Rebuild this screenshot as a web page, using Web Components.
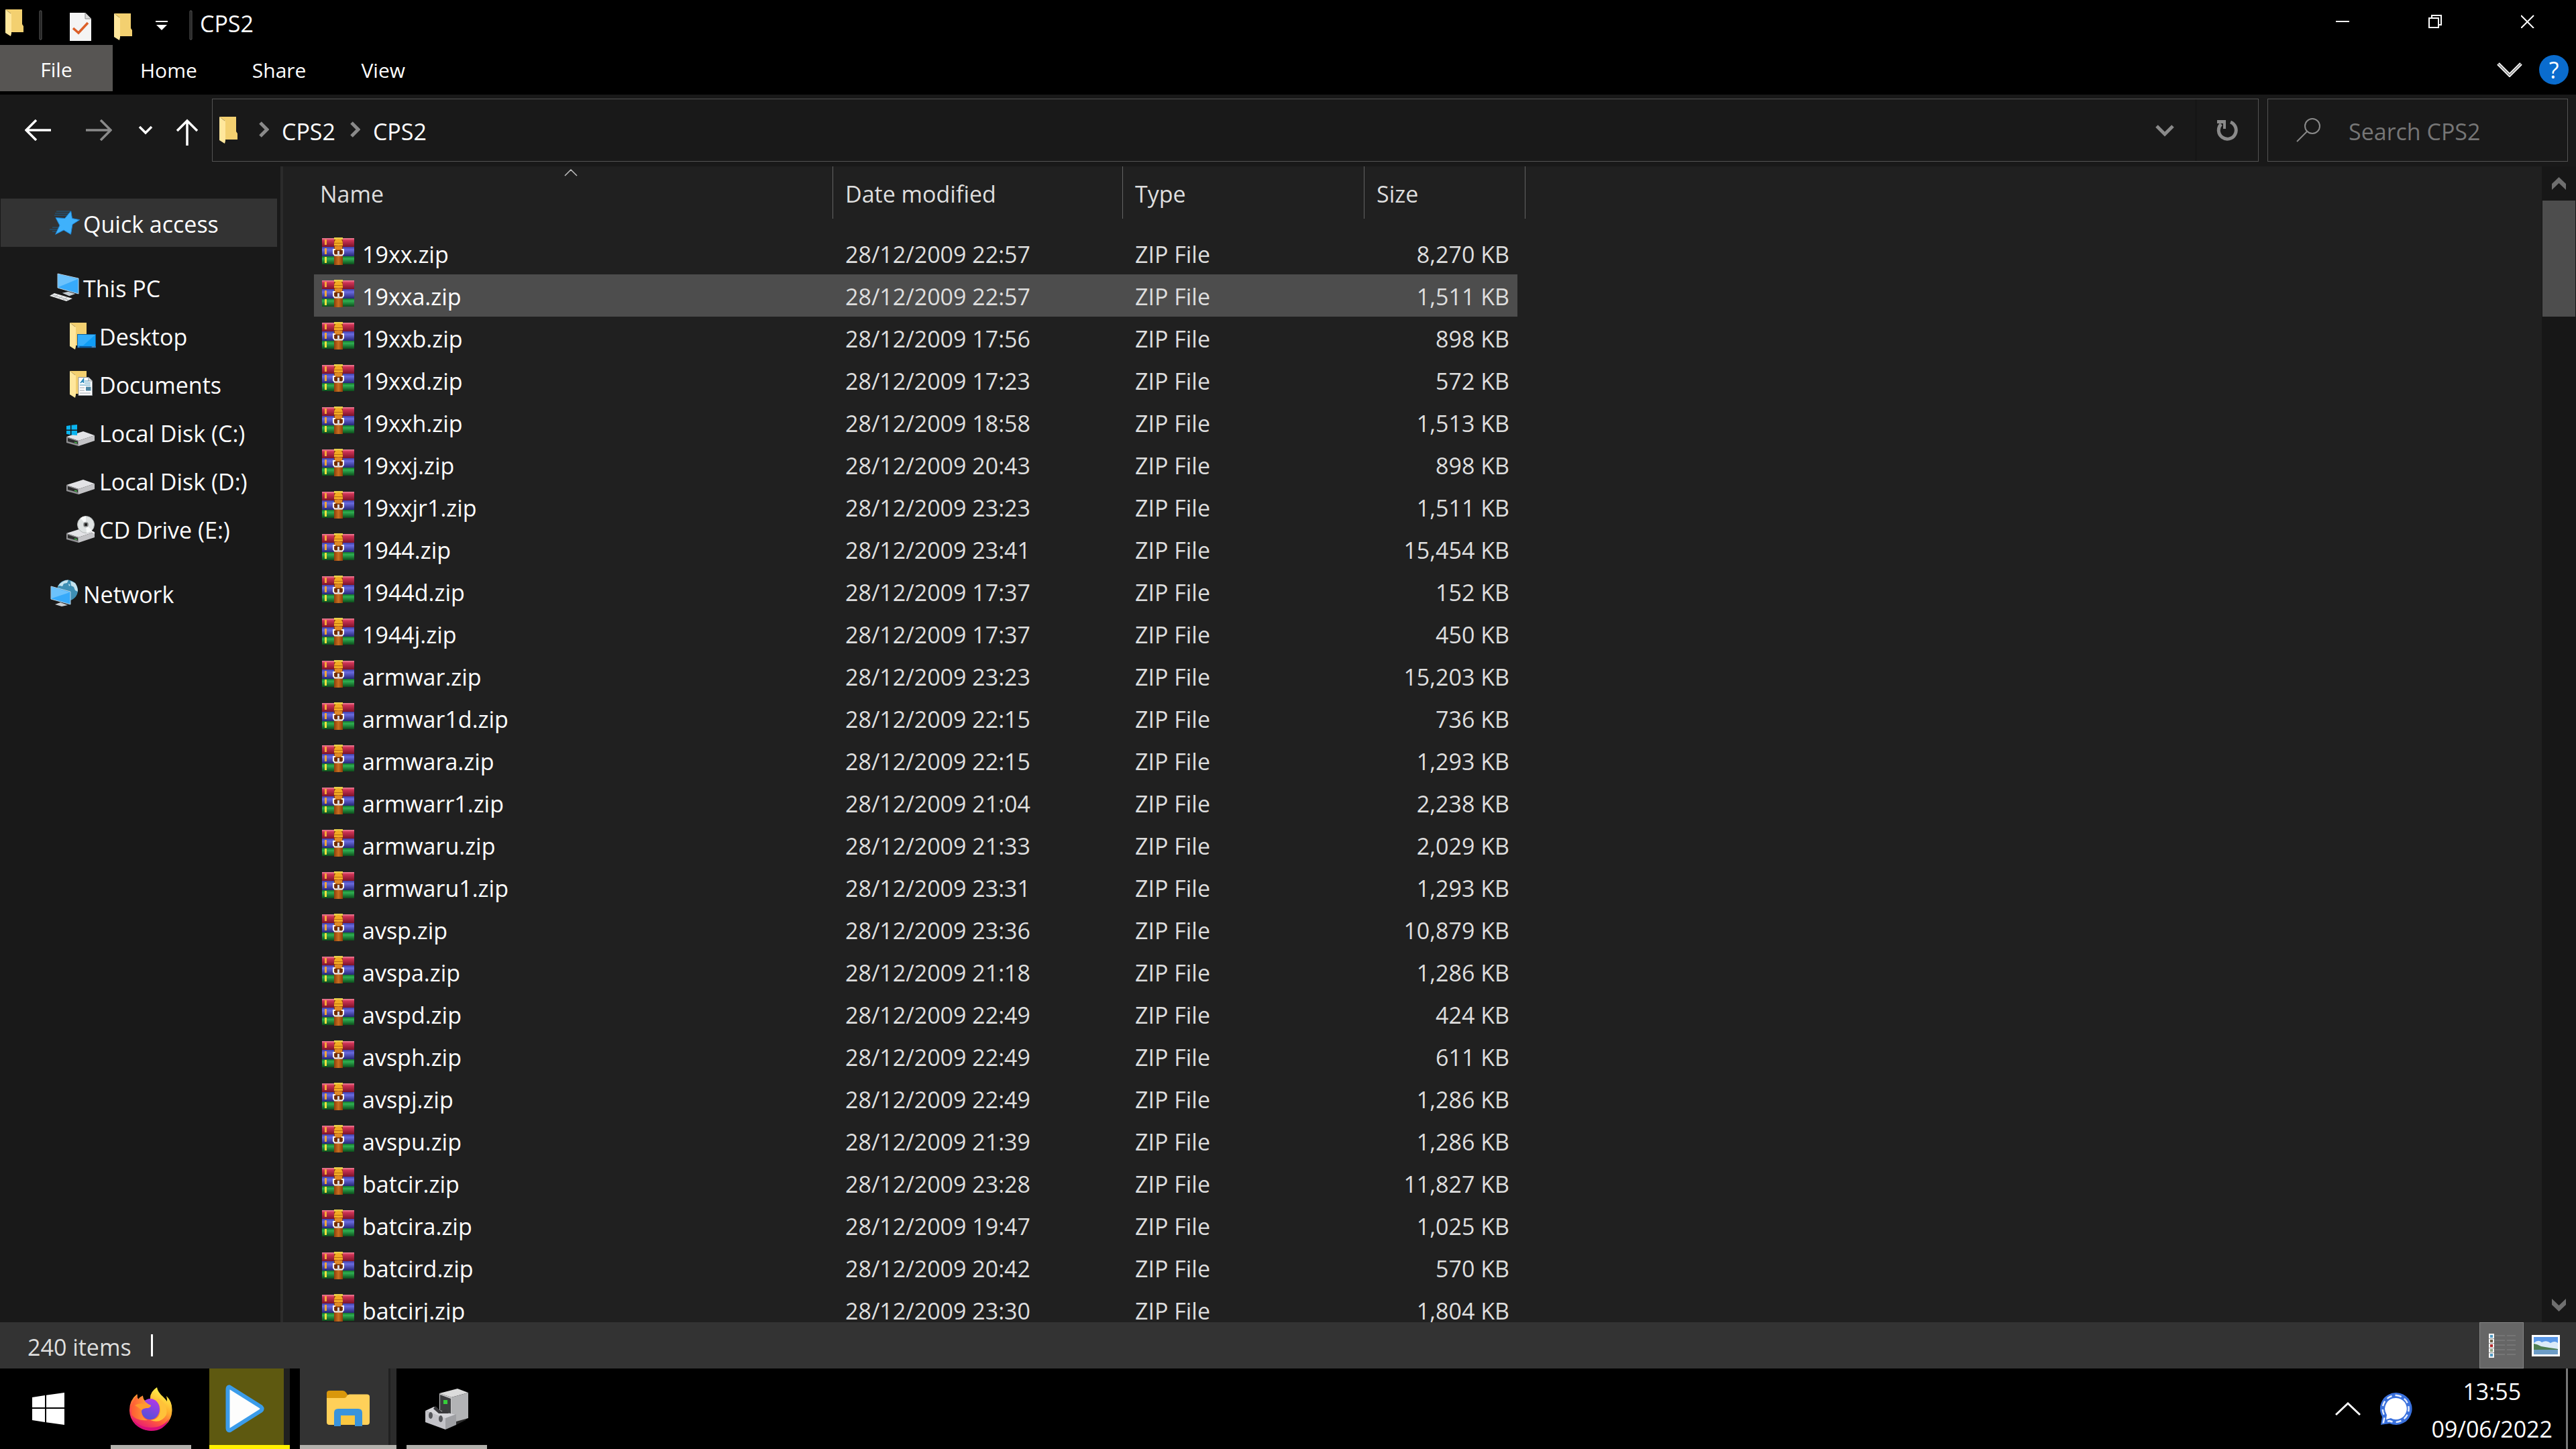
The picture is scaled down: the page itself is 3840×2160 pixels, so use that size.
<!DOCTYPE html>
<html lang="en">
<head>
<meta charset="utf-8">
<title>CPS2</title>
<style>
  html, body {
    margin: 0;
    height: 100%;
    overflow: hidden;
    background: #000;
  }
  body {
    font: 34px "Open Sans", "Noto Sans", sans-serif;
    color: #fff;
  }
</style>
</head>
<body>
<desktop-screen></desktop-screen>

<script>
const FOLDER = `
  <path d="M0 0H25V22L27 25V34H8V6Z" fill="#f3d070"/>
  <path d="M0 0L9 7V36L8 40L0 35Z" fill="#ffe79c"/>`;

const DISK = `
  <path d="M3 31L28 23L45 29L21 37Z" fill="#e3e3e6"/>
  <path d="M21 37L45 29V37L21 45Z" fill="#c3c3c6"/>
  <path d="M3 31L21 37V45L3 40Z" fill="#8f8f92"/>
  <path d="M5 33L20 38V42L5 38Z" fill="#2b2b2b"/>
  <path d="M15 38.500L19 39.500V41L15 40Z" fill="#45c04a"/>`;

// name: [width, height, markup]
const ICONS = {
  folder: [27, 40, FOLDER],
  properties: [32, 42, `
    <path d="M0 0H23L32 9V42H0Z" fill="#f4f4f4"/>
    <path d="M23 0V9H32" fill="#d8d8d8" stroke="#8d8d8d" stroke-width="1"/>
    <path d="M5 23L13 30L27 15" fill="none" stroke="#dc5f28" stroke-width="3.500"/>`],
  customize: [18, 14, `<path d="M0 0H18V2H0ZM1 6H17L9 14Z" fill="#fff"/>`],
  grip: [5, 45, `<rect x="1" y="1" width="3" height="43" rx="1" fill="#1c1c1c" stroke="#5a5a5a"/>`],
  minimize: [20, 20, `<path d="M0 10H20" stroke="#fff" stroke-width="2"/>`],
  restore: [20, 20, `<path d="M1 5H15V19H1ZM5 5V1H19V15H15" fill="none" stroke="#fff" stroke-width="2"/>`],
  close: [20, 20, `<path d="M0 1L19 20M19 1L0 20" stroke="#fff" stroke-width="2"/>`],
  expand: [38, 22, `
    <path d="M2 2L19 19L36 2" fill="none" stroke="#fff" stroke-width="5"/>
    <path d="M2 2L19 19L36 2" fill="none" stroke="#9a9a9a" stroke-width="2"/>`],
  back: [40, 32, `<path d="M39 16H2M17 1L2 16L17 31" fill="none" stroke="#fff" stroke-width="3.500"/>`],
  forward: [40, 32, `<path d="M1 16H38M23 1L38 16L23 31" fill="none" stroke="#8a8a8a" stroke-width="3.500"/>`],
  recent: [22, 14, `<path d="M2 2L11 11L20 2" fill="none" stroke="#fff" stroke-width="3.500"/>`],
  up: [32, 40, `<path d="M16 40V3M1 18L16 3L31 18" fill="none" stroke="#fff" stroke-width="3.500"/>`],
  crumb: [16, 24, `<path d="M3 2L13 12L3 22" fill="none" stroke="#8a8a8a" stroke-width="5"/>`],
  history: [28, 19, `<path d="M2 3L14 15L26 3" fill="none" stroke="#8a8a8a" stroke-width="5"/>`],
  refresh: [34, 34, `
    <path d="M22 5A13 13 0 1 1 8 8" fill="none" stroke="#8a8a8a" stroke-width="5"/>
    <path d="M2 2H15V15H11V7H2Z" fill="#8a8a8a"/>`],
  search: [36, 36, `
    <circle cx="24" cy="12" r="11" fill="none" stroke="#8a8a8a" stroke-width="2"/>
    <path d="M16 20L1 35" stroke="#8a8a8a" stroke-width="2"/>`],
  scrollup: [21, 19, `<path d="M0 10L10.500 0L21 10V19L10.500 9L0 19Z" fill="#6f6f6f"/>`],
  scrolldown: [21, 19, `<path d="M0 9L10.500 19L21 9V0L10.500 10L0 0Z" fill="#6f6f6f"/>`],
  sorted: [20, 11, `<path d="M1 10L10 1L19 10" fill="none" stroke="#bdbdbd" stroke-width="1.500"/>`],
  star: [48, 48, `
    <path d="M12 7H33M10 10H31M9 13H30M6 31H17M2 34H16M6 37H14" stroke="#1d5f8d" stroke-width="1"/>
    <path d="M33.700 6.700L35.500 17.500L46.700 19.700L36 26.500L33.500 41.300L23 35L10.700 41.300L17 28L11 16.500L24.700 17.500Z" fill="#3fb1fb" stroke="#1c86d8"/>`],
  pc: [48, 48, `
    <path d="M20.700 32.700L29.700 30.700L40.300 34L31.300 37.300Z" fill="#c4ccd2"/>
    <path d="M14 4L45 11V34L14 25Z" fill="#37aafa" stroke="#bcd3e2" stroke-width="1"/>
    <path d="M15 5L44 12L15 24Z" fill="#6cc2fc"/>
    <path d="M2 37L9 33L36 41L27 45Z" fill="#e9ebec"/>
    <path d="M6 35.500L31 43.500M9 39L14 35.500M16 41L21 38M22 43L28 39.500" stroke="#a5a9ad" stroke-width="1"/>`],
  desktop: [48, 48, `
    <g transform="translate(8 5)">${FOLDER}</g>
    <rect x="19.500" y="22.500" width="27" height="19.500" fill="#109df5" stroke="#0c5f9c"/>
    <path d="M20 23H46L28 39H20Z" fill="#35aefb"/>
    <path d="M20 41H46" stroke="#0b5aa0" stroke-width="2"/>
    <path d="M21 41H22M41 41H42M43 41H44M45 41H46" stroke="#fff" stroke-width="1"/>`],
  documents: [48, 48, `
    <g transform="translate(8 5)">${FOLDER}</g>
    <path d="M21 14.500H36L41.500 20V41.500H21Z" fill="#fff" stroke="#8f9499"/>
    <path d="M36 14.500V20H41.500" fill="#e4e6e8" stroke="#8f9499"/>
    <path d="M24 23L28.500 17V23M25.500 21H29" fill="none" stroke="#1f84b8" stroke-width="1.500"/>
    <path d="M30 20H36M30 23H39M23 26H39" stroke="#3a8fb8" stroke-width="1.200"/>
    <path d="M23 30H30M23 34H30M23 38H39" stroke="#9aa1a8" stroke-width="1"/>
    <rect x="32" y="28.500" width="7.500" height="6" fill="#4e87a3"/>`],
  system: [48, 48, `${DISK}
    <path d="M3 15L9 14V20.500H3ZM10.500 13.800L19 13V20.500H10.500ZM3 22H9V28L3 27ZM10.500 22H19V29L10.500 28.200Z" fill="#0ab4f0"/>`],
  disk: [48, 48, DISK],
  cd: [48, 48, `${DISK}
    <circle cx="32" cy="18" r="12.500" fill="#dfe3e3" stroke="#b4b8b8"/>
    <path d="M32 18L24 8.500A12.500 12.500 0 0 1 32 5.500ZM32 18L41 26.500A12.500 12.500 0 0 1 33 30.500Z" fill="#f8fafa"/>
    <circle cx="32" cy="18" r="4" fill="#8d9090"/>
    <rect x="30" y="16" width="4" height="4" fill="#222"/>
    <path d="M39 27L45 31" stroke="#fff" stroke-width="1.500"/>`],
  network: [48, 48, `
    <circle cx="28.500" cy="20" r="15.500" fill="#3e8fb4"/>
    <path d="M14 14Q20 5 30 4.500L28 9L23 10L21 14L17 13ZM33 6L40 9Q44 15 44 22L40 20L38 15L34 13ZM30 10L33 12L31 14Z" fill="#c5e3ee"/>
    <path d="M4 14L33 22V41L4 33Z" fill="#37aafa" stroke="#bcd3e2"/>
    <path d="M5 15L32 23L5 32Z" fill="#6cc2fc"/>
    <path d="M10 41L18 38L29 42L20 44Z" fill="#c9ced2"/>`],
  archive: [48, 42, `
    <defs>
      <linearGradient id="r" x2="0" y2="1"><stop stop-color="#f2879d"/><stop offset=".25" stop-color="#cf3355"/><stop offset="1" stop-color="#7c1329"/></linearGradient>
      <linearGradient id="b" x2="0" y2="1"><stop stop-color="#3e3fa8"/><stop offset=".3" stop-color="#6a6be0"/><stop offset="1" stop-color="#262674"/></linearGradient>
      <linearGradient id="g" x2="0" y2="1"><stop stop-color="#14722b"/><stop offset=".3" stop-color="#2fb052"/><stop offset="1" stop-color="#0c4c1b"/></linearGradient>
      <linearGradient id="s"><stop stop-color="#8d3d0b"/><stop offset=".5" stop-color="#c96f20"/><stop offset="1" stop-color="#8d3d0b"/></linearGradient>
    </defs>
    <rect y="1" width="48" height="13" fill="url(#r)"/>
    <rect y="14" width="48" height="14" fill="url(#b)"/>
    <rect y="28" width="48" height="12" fill="url(#g)"/>
    <path d="M4 3H7V11H4ZM4 16H7V25H4Z" fill="#f5a83a"/>
    <path d="M4 29H7V38H4Z" fill="#f3e13d"/>
    <rect x="18" width="13" height="41" fill="url(#s)"/>
    <path d="M18 0H31V3H18Z" fill="#e8cf49"/>
    <path d="M18 10Q18 2 24.500 2T31 10V12H18Z" fill="#f2ab23"/>
    <path d="M18 8.500H31" stroke="#b86b10" stroke-width="1"/>
    <path d="M19 13H30V18H19Z" fill="#e08a25"/>
    <path d="M19 19H30V25H19Z" fill="#6d2c08"/>
    <path d="M20 18H17V24L19 26.500H30L32 24V18H29" fill="none" stroke="#f2f2f5" stroke-width="2"/>
    <path d="M24.500 20V27" stroke="#d5d5da" stroke-width="3"/>`],
  details: [42, 36, `
    <path d="M9 3H40M9 10H40M9 17H40M9 24H40M9 31H40" stroke="#848484" stroke-width="1" stroke-dasharray="15 3"/>
    <path d="M0 0H8V36H0Z" fill="#f4f4f4"/>
    <path d="M2 2H6V6H2ZM2 30H6V34H2Z" fill="#4f9ac4"/>
    <path d="M2 9H6V13H2Z" fill="#6d6046"/>
    <path d="M2 16H6V20H2Z" fill="#b5282a"/>
    <path d="M2 23H6V27H2Z" fill="#8fa384"/>
    <path d="M0 7.500H8M0 14.500H8M0 21.500H8M0 28.500H8" stroke="#9a9a9a" stroke-width="1"/>`],
  thumbs: [42, 32, `
    <rect width="42" height="32" fill="#fff"/>
    <rect x="3" y="3" width="36" height="26" fill="#5a98e8"/>
    <path d="M3 12Q10 6 15 11Q22 7 28 12Q34 8 39 12V22H3Z" fill="#dcebf9"/>
    <path d="M3 13Q9 14 14 17L26 19L39 21V23H3Z" fill="#4d7c51"/>
    <path d="M3 22H39V29H3Z" fill="#6c9cc6"/>`],
  start: [48, 48, `<path d="M0 7L19 4V22H0ZM21 3.700L48 0V22H21ZM0 24H19V44L0 41ZM21 24H48V48L21 44.300Z" fill="#fff"/>`],
  firefox: [64, 66, `
    <defs>
      <linearGradient id="f" x1=".8" y1=".1" x2=".3" y2="1"><stop stop-color="#fff04a"/><stop offset=".35" stop-color="#ffb02e"/><stop offset=".65" stop-color="#ff5a3c"/><stop offset="1" stop-color="#e5127d"/></linearGradient>
      <linearGradient id="p" x1=".7" x2=".3" y2="1"><stop stop-color="#b238e6"/><stop offset="1" stop-color="#4f52d8"/></linearGradient>
      <linearGradient id="o" x2="1"><stop stop-color="#ff5a35"/><stop offset="1" stop-color="#ffb035"/></linearGradient>
    </defs>
    <path d="M11.500 11Q11 16 13 19Q16 15 20 13.500Q19.500 18 23 21L31 19Q30 8 41 1Q42 8 50 15Q54 19 56 22Q56 17 55 14Q64 22 63.500 36A31.700 30 0 0 1 0 35Q0 20 11.500 11Z" fill="url(#f)"/>
    <ellipse cx="31" cy="33.500" rx="14" ry="15.500" fill="url(#p)"/>
    <path d="M37 18Q46 24 46 35Q45 49 31 50Q47 56 55 42Q58 28 44 18Z" fill="#ffc23a"/>
    <path d="M3 29Q6 18 12 12Q11 16 13 19Q17 15 20 13.500Q20 19 24 23Q27 26 32 28Q31 32 25 32Q17 33 18 38Q19 47 27 50Q12 52 3 42Z" fill="url(#o)"/>
    <path d="M8 28Q14 24 22 26L32 28Q31 32 25 32Q20 32 18 35Q12 30 8 28Z" fill="#ff9b2c"/>
    <path d="M5 48Q14 61 32 61Q50 61 59 48Q52 66 32 66Q12 65 5 48Z" fill="#d90f7a"/>`],
  play: [58, 72, `<path d="M6 3.500Q3.500 3 3.500 7V65Q3.500 69 7 68L53 39Q56 36 53 33Z" fill="#fdfdfd" stroke="#3b9cea" stroke-width="6"/>`],
  explorer: [64, 54, `
    <path d="M0 4Q0 0 4 0H24Q27 0 29 3L31 6V12H0Z" fill="#d9970b"/>
    <path d="M0 11H26Q29 11 30 8Q31 5.500 34 5.500H60Q64 5.500 64 9V47Q64 51 60 51H4Q0 51 0 47Z" fill="#ffd059"/>
    <path d="M11 53V33Q11 27 17 27H47Q53 27 53 33V53H42V37H21V53Z" fill="#3a94dc"/>
    <path d="M21 37H42V51H21Z" fill="#fbc740"/>`],
  device: [64, 64, `
    <path d="M38 50L64 44L60 49L46 56Z" fill="#2a2a2a"/>
    <path d="M21 9L48 2L64 8L39 15Z" fill="#dcdcdc"/>
    <path d="M39 15L64 8V46L39 53Z" fill="#b2b3b5"/>
    <path d="M21 9L39 15V53L21 42Z" fill="#c8c8ca"/>
    <path d="M22 11L38 17V41L22 34Z" fill="#3c3d3f"/>
    <rect x="27" y="19" width="6" height="6" fill="#35cf3a"/>
    <path d="M0 35L13 29L22 35L33 38L46 41L30 47Z" fill="#d5d5d9"/>
    <path d="M12 32L15 28L24 36L31 33L35 39L20 39Z" fill="#39393c"/>
    <path d="M0 35L30 46V63L0 52Z" fill="#c3c3c8"/>
    <path d="M30 46L46 40V56L30 63Z" fill="#9fa0a4"/>
    <ellipse cx="8" cy="42" rx="3" ry="5" fill="#55565a"/>
    <ellipse cx="23" cy="47" rx="3" ry="5" fill="#55565a"/>`],
  tray: [38, 22, `<path d="M1 20L19 3L37 20" fill="none" stroke="#fff" stroke-width="3"/>`],
  signal: [48, 48, `
    <path d="M24 0A24 24 0 1 1 14 46L1 48L3 36A24 24 0 0 1 24 0Z" fill="#3a71dd"/>
    <path d="M24 4A20 20 0 1 1 14 42L5 44L7 35A20 20 0 0 1 24 4Z" fill="none" stroke="#e4edff" stroke-width="2.500" stroke-dasharray="8 5"/>
    <path d="M24 8A16 16 0 1 1 16 38L9 40L10 33A16 16 0 0 1 24 8Z" fill="#fff"/>`],
};

class WinIcon extends HTMLElement {
  constructor() {
    super();
    this.attachShadow({mode: 'open'});
  }

  connectedCallback() {
    const [w, h, body] = ICONS[this.getAttribute('name')];
    this.shadowRoot.innerHTML = `
      <style>
        :host { display: block; flex: none; }
        svg { display: block; }
      </style>
      <svg width="${w}" height="${h}" viewBox="0 0 ${w} ${h}" aria-hidden="true">${body}</svg>
    `;
  }
}
customElements.define('win-icon', WinIcon);

const BUTTON = `
  button {
    display: flex;
    align-items: center;
    justify-content: center;
    margin: 0;
    padding: 0;
    border: 0;
    background: none;
    font: inherit;
    color: inherit;
  }
`;

class TitleBar extends HTMLElement {
  constructor() {
    super();
    this.attachShadow({mode: 'open'}).innerHTML = `
      <style>
        ${BUTTON}
        :host { display: flex; height: 67px; }
        .quick { display: flex; flex: 1; align-items: center; padding: 0 8px; }
        .quick button { margin-left: 34px; }
        .grip { margin-left: 23px; padding-top: 8px; }
        .doc { padding-left: 7px; }
        .tools { display: flex; align-items: center; padding-top: 12px; }
        .tools .end { margin: 0 32px 0 35px; padding-bottom: 4px; }
        .last { padding-top: 8px; }
        h1 { margin: 0 0 0 11px; padding-top: 3px; font: inherit; }
        .window { display: flex; height: 64px; padding-right: 3px; }
        .window button { width: 138px; }
      </style>
      <div class="quick">
        <win-icon name="folder"></win-icon>
        <win-icon class="grip" name="grip"></win-icon>
        <div class="tools">
          <button class="doc" aria-label="Properties"><win-icon name="properties"></win-icon></button>
          <button aria-label="New folder"><win-icon name="folder"></win-icon></button>
          <button class="end" aria-label="Customize Quick Access Toolbar"><win-icon name="customize"></win-icon></button>
        </div>
        <win-icon class="last" name="grip"></win-icon>
        <h1><slot></slot></h1>
      </div>
      <div class="window">
        <button aria-label="Minimize"><win-icon name="minimize"></win-icon></button>
        <button aria-label="Restore"><win-icon name="restore"></win-icon></button>
        <button aria-label="Close"><win-icon name="close"></win-icon></button>
      </div>
    `;
  }
}
customElements.define('title-bar', TitleBar);

class RibbonTabs extends HTMLElement {
  constructor() {
    super();
    this.attachShadow({mode: 'open'}).innerHTML = `
      <style>
        ${BUTTON}
        :host { display: flex; height: 74px; font-size: 30px; }
        nav { display: flex; flex: 1; height: 69px; }
        nav button { padding: 5px 41px 0; }
        nav .file { width: 168px; padding: 4px 0 0; background: #575553; }
        .side { display: flex; align-items: center; gap: 25px; padding-right: 11px; }
        .help {
          width: 44px;
          height: 44px;
          border-radius: 50%;
          background: #0a6cce;
          font-size: 34px;
          line-height: 44px;
        }
      </style>
      <nav>
        <button class="file">File</button>
        <button>Home</button>
        <button>Share</button>
        <button>View</button>
      </nav>
      <div class="side">
        <button aria-label="Expand the Ribbon"><win-icon name="expand"></win-icon></button>
        <button class="help" aria-label="Help">?</button>
      </div>
    `;
  }
}
customElements.define('ribbon-tabs', RibbonTabs);

class AddressBar extends HTMLElement {
  constructor() {
    super();
    this.attachShadow({mode: 'open'}).innerHTML = `
      <style>
        ${BUTTON}
        :host {
          display: flex;
          box-sizing: border-box;
          height: 107px;
          padding: 6px 12px 7px;
          background: #191919;
        }
        .arrow { width: 90px; }
        .recent { width: 50px; }
        .up { width: 74px; padding-top: 6px; }
        .path, .search {
          display: flex;
          align-items: center;
          box-sizing: border-box;
          border: 1px solid #535353;
        }
        .path { flex: 1; padding-left: 10px; }
        ol { display: flex; flex: 1; margin: 0 0 0 10px; padding: 0; list-style: none; }
        li { display: flex; align-items: center; gap: 19px; margin-left: 21px; }
        li win-icon { padding-bottom: 2px; }
        a { padding-top: 3px; color: inherit; text-decoration: none; }
        .path button { width: 93px; height: 100%; }
        .path .refresh { box-sizing: border-box; border-left: 1px solid #111; }
        .search { width: 448px; margin-left: 13px; padding-left: 42px; gap: 42px; }
        input {
          flex: 1;
          min-width: 0;
          margin: 0;
          padding: 4px 0 0;
          border: 0;
          outline: 0;
          background: none;
          font: inherit;
          color: #fff;
        }
        input::placeholder { color: #767676; opacity: 1; }
      </style>
      <button class="arrow" aria-label="Back"><win-icon name="back"></win-icon></button>
      <button class="arrow" aria-label="Forward"><win-icon name="forward"></win-icon></button>
      <button class="recent" aria-label="Recent locations"><win-icon name="recent"></win-icon></button>
      <button class="up" aria-label="Up"><win-icon name="up"></win-icon></button>
      <div class="path">
        <win-icon name="folder"></win-icon>
        <ol>
          <li><win-icon name="crumb"></win-icon><a href="#">CPS2</a></li>
          <li><win-icon name="crumb"></win-icon><a href="#">CPS2</a></li>
        </ol>
        <button aria-label="Previous locations"><win-icon name="history"></win-icon></button>
        <button class="refresh" aria-label="Refresh"><win-icon name="refresh"></win-icon></button>
      </div>
      <label class="search">
        <win-icon name="search"></win-icon>
        <input type="text" placeholder="Search CPS2" aria-label="Search CPS2">
      </label>
    `;
  }
}
customElements.define('address-bar', AddressBar);

class NavItem extends HTMLElement {
  constructor() {
    super();
    this.attachShadow({mode: 'open'});
  }

  connectedCallback() {
    this.shadowRoot.innerHTML = `
      <style>
        :host { display: block; }
        :host([root]:not(:first-child)) { margin-top: 24px; }
        a {
          display: flex;
          align-items: center;
          gap: 4px;
          height: 72px;
          padding-left: 95px;
          color: inherit;
          text-decoration: none;
          white-space: nowrap;
        }
        :host([root]) a { padding-left: 71px; }
        :host([selected]) a { background: #333; }
        span { padding-top: 4px; }
      </style>
      <a href="#"><win-icon name="${this.getAttribute('icon')}"></win-icon><span><slot></slot></span></a>
    `;
  }
}
customElements.define('nav-item', NavItem);

class NavPane extends HTMLElement {
  constructor() {
    super();
    this.attachShadow({mode: 'open'}).innerHTML = `
      <style>
        :host {
          display: block;
          box-sizing: border-box;
          width: 422px;
          padding: 48px 5px 0 1px;
          border-right: 4px solid #2b2b2b;
          background: #191919;
        }
      </style>
      <slot></slot>
    `;
  }
}
customElements.define('nav-pane', NavPane);

const FILES = [
  ['19xx.zip', '22:57', '8,270'],
  ['19xxa.zip', '22:57', '1,511'],
  ['19xxb.zip', '17:56', '898'],
  ['19xxd.zip', '17:23', '572'],
  ['19xxh.zip', '18:58', '1,513'],
  ['19xxj.zip', '20:43', '898'],
  ['19xxjr1.zip', '23:23', '1,511'],
  ['1944.zip', '23:41', '15,454'],
  ['1944d.zip', '17:37', '152'],
  ['1944j.zip', '17:37', '450'],
  ['armwar.zip', '23:23', '15,203'],
  ['armwar1d.zip', '22:15', '736'],
  ['armwara.zip', '22:15', '1,293'],
  ['armwarr1.zip', '21:04', '2,238'],
  ['armwaru.zip', '21:33', '2,029'],
  ['armwaru1.zip', '23:31', '1,293'],
  ['avsp.zip', '23:36', '10,879'],
  ['avspa.zip', '21:18', '1,286'],
  ['avspd.zip', '22:49', '424'],
  ['avsph.zip', '22:49', '611'],
  ['avspj.zip', '22:49', '1,286'],
  ['avspu.zip', '21:39', '1,286'],
  ['batcir.zip', '23:28', '11,827'],
  ['batcira.zip', '19:47', '1,025'],
  ['batcird.zip', '20:42', '570'],
  ['batcirj.zip', '23:30', '1,804'],
];

class FileList extends HTMLElement {
  constructor() {
    super();
    this.attachShadow({mode: 'open'});
    this.selected = '19xxa.zip';
  }

  connectedCallback() {
    this.render();
  }

  render() {
    const rows = FILES.map(([name, time, size]) => `
      <tr${name === this.selected ? ' class="selected"' : ''}>
        <td><div class="name"><win-icon name="archive"></win-icon><span>${name}</span></div></td>
        <td>28/12/2009 ${time}</td>
        <td>ZIP File</td>
        <td>${size} KB</td>
      </tr>`).join('');

    this.shadowRoot.innerHTML = `
      <style>
        :host {
          display: block;
          overflow: hidden;
          background: #202020;
          color: #dedede;
        }
        table {
          width: 1806px;
          margin-left: 46px;
          border-spacing: 0;
          table-layout: fixed;
        }
        th, td { padding: 0; font-weight: normal; text-align: left; white-space: nowrap; }
        th { height: 98px; vertical-align: top; }
        th div {
          position: relative;
          box-sizing: border-box;
          height: 78px;
          padding: 4px 0 0 18px;
          border-right: 1px solid #636363;
          line-height: 74px;
        }
        th:first-child div { padding-left: 9px; }
        .sort { position: absolute; top: 4px; left: 0; right: 8px; display: flex; justify-content: center; }
        .c1 { width: 774px; }
        .c2 { width: 432px; }
        .c3 { width: 360px; }
        td { height: 60px; padding: 3px 0 0 18px; line-height: 60px; }
        td:first-child { padding: 0 0 0 12px; color: #fff; }
        td:last-child {
          padding-right: 12px;
          border-right: 12px solid transparent;
          background-clip: padding-box;
          text-align: right;
        }
        .name { display: flex; gap: 12px; height: 63px; }
        .name win-icon { padding-top: 8px; }
        .name span { padding-top: 3px; }
        .selected td { background-color: #4d4d4d; }
      </style>
      <table>
        <colgroup><col class="c1"><col class="c2"><col class="c3"><col></colgroup>
        <thead>
          <tr>
            <th><div>Name<span class="sort"><win-icon name="sorted"></win-icon></span></div></th>
            <th><div>Date modified</div></th>
            <th><div>Type</div></th>
            <th><div>Size</div></th>
          </tr>
        </thead>
        <tbody>${rows}</tbody>
      </table>
    `;
  }
}
customElements.define('file-list', FileList);

class ScrollRail extends HTMLElement {
  constructor() {
    super();
    this.attachShadow({mode: 'open'}).innerHTML = `
      <style>
        ${BUTTON}
        :host { display: flex; flex-direction: column; width: 51px; background: #171717; }
        button { height: 51px; }
        .track { flex: 1; padding: 0 1px; }
        .thumb { height: 173px; background: #4d4d4d; }
      </style>
      <button aria-label="Scroll up"><win-icon name="scrollup"></win-icon></button>
      <div class="track"><div class="thumb"></div></div>
      <button aria-label="Scroll down"><win-icon name="scrolldown"></win-icon></button>
    `;
  }
}
customElements.define('scroll-rail', ScrollRail);

class StatusBar extends HTMLElement {
  constructor() {
    super();
    this.attachShadow({mode: 'open'}).innerHTML = `
      <style>
        ${BUTTON}
        :host { display: flex; height: 69px; padding: 0 12px 0 41px; background: #333; color: #dedede; }
        .count { display: flex; flex: 1; align-items: center; gap: 29px; }
        .count span { padding-top: 4px; }
        .bar { width: 3px; height: 33px; background: #fff; }
        button { box-sizing: border-box; width: 66px; }
        .on { padding-left: 4px; border: 1px solid #868686; background: #666; }
      </style>
      <div class="count"><span><slot></slot></span><div class="bar"></div></div>
      <button class="on" aria-label="Details"><win-icon name="details"></win-icon></button>
      <button aria-label="Large thumbnails"><win-icon name="thumbs"></win-icon></button>
    `;
  }
}
customElements.define('status-bar', StatusBar);

class TaskBar extends HTMLElement {
  constructor() {
    super();
    this.attachShadow({mode: 'open'}).innerHTML = `
      <style>
        ${BUTTON}
        :host { display: flex; height: 120px; background: #000; }
        .apps { display: flex; flex: 1; gap: 15px; }
        .apps button { box-sizing: border-box; width: 120px; padding-top: 6px; border-bottom: 6px solid #b3b1ac; }
        .apps .start { width: 144px; margin-right: 6px; padding: 0; border: 0; }
        .apps .spaced { margin-right: 12px; }
        .apps .alert {
          padding-right: 15px;
          border-color: #fff000;
          background: linear-gradient(to right, #5e5910 111px, #202020 0);
        }
        .apps .active {
          width: 144px;
          background: linear-gradient(to right, #333 132px, #202020 0, #202020 135px, #2b2b2b 0);
        }
        .tray { display: flex; align-items: center; gap: 29px; }
        .clock { padding-top: 4px; line-height: 56px; text-align: center; }
        .peek { width: 12px; margin-left: 20px; border-left: 3px solid #777; }
      </style>
      <div class="apps">
        <button class="start" aria-label="Start"><win-icon name="start"></win-icon></button>
        <button class="spaced" aria-label="Firefox"><win-icon name="firefox"></win-icon></button>
        <button class="alert" aria-label="Media player"><win-icon name="play"></win-icon></button>
        <button class="active" aria-label="File Explorer"><win-icon name="explorer"></win-icon></button>
        <button aria-label="Device"><win-icon name="device"></win-icon></button>
      </div>
      <div class="tray">
        <button aria-label="Show hidden icons"><win-icon name="tray"></win-icon></button>
        <button aria-label="Signal"><win-icon name="signal"></win-icon></button>
        <div class="clock"><div>13:55</div><div>09/06/2022</div></div>
      </div>
      <div class="peek"></div>
    `;
  }
}
customElements.define('task-bar', TaskBar);

class DesktopScreen extends HTMLElement {
  constructor() {
    super();
    this.attachShadow({mode: 'open'}).innerHTML = `
      <style>
        :host { display: flex; flex-direction: column; height: 100vh; }
        title-bar, ribbon-tabs, address-bar, status-bar, task-bar { flex: none; }
        main { display: flex; flex: 1; min-height: 0; }
        nav-pane, scroll-rail { flex: none; }
        file-list { flex: 1; }
      </style>
      <title-bar>CPS2</title-bar>
      <ribbon-tabs></ribbon-tabs>
      <address-bar></address-bar>
      <main>
        <nav-pane>
          <nav-item root selected icon="star">Quick access</nav-item>
          <nav-item root icon="pc">This PC</nav-item>
          <nav-item icon="desktop">Desktop</nav-item>
          <nav-item icon="documents">Documents</nav-item>
          <nav-item icon="system">Local Disk (C:)</nav-item>
          <nav-item icon="disk">Local Disk (D:)</nav-item>
          <nav-item icon="cd">CD Drive (E:)</nav-item>
          <nav-item root icon="network">Network</nav-item>
        </nav-pane>
        <file-list></file-list>
        <scroll-rail></scroll-rail>
      </main>
      <status-bar>240 items</status-bar>
      <task-bar></task-bar>
    `;
  }
}
customElements.define('desktop-screen', DesktopScreen);
</script>
</body>
</html>
